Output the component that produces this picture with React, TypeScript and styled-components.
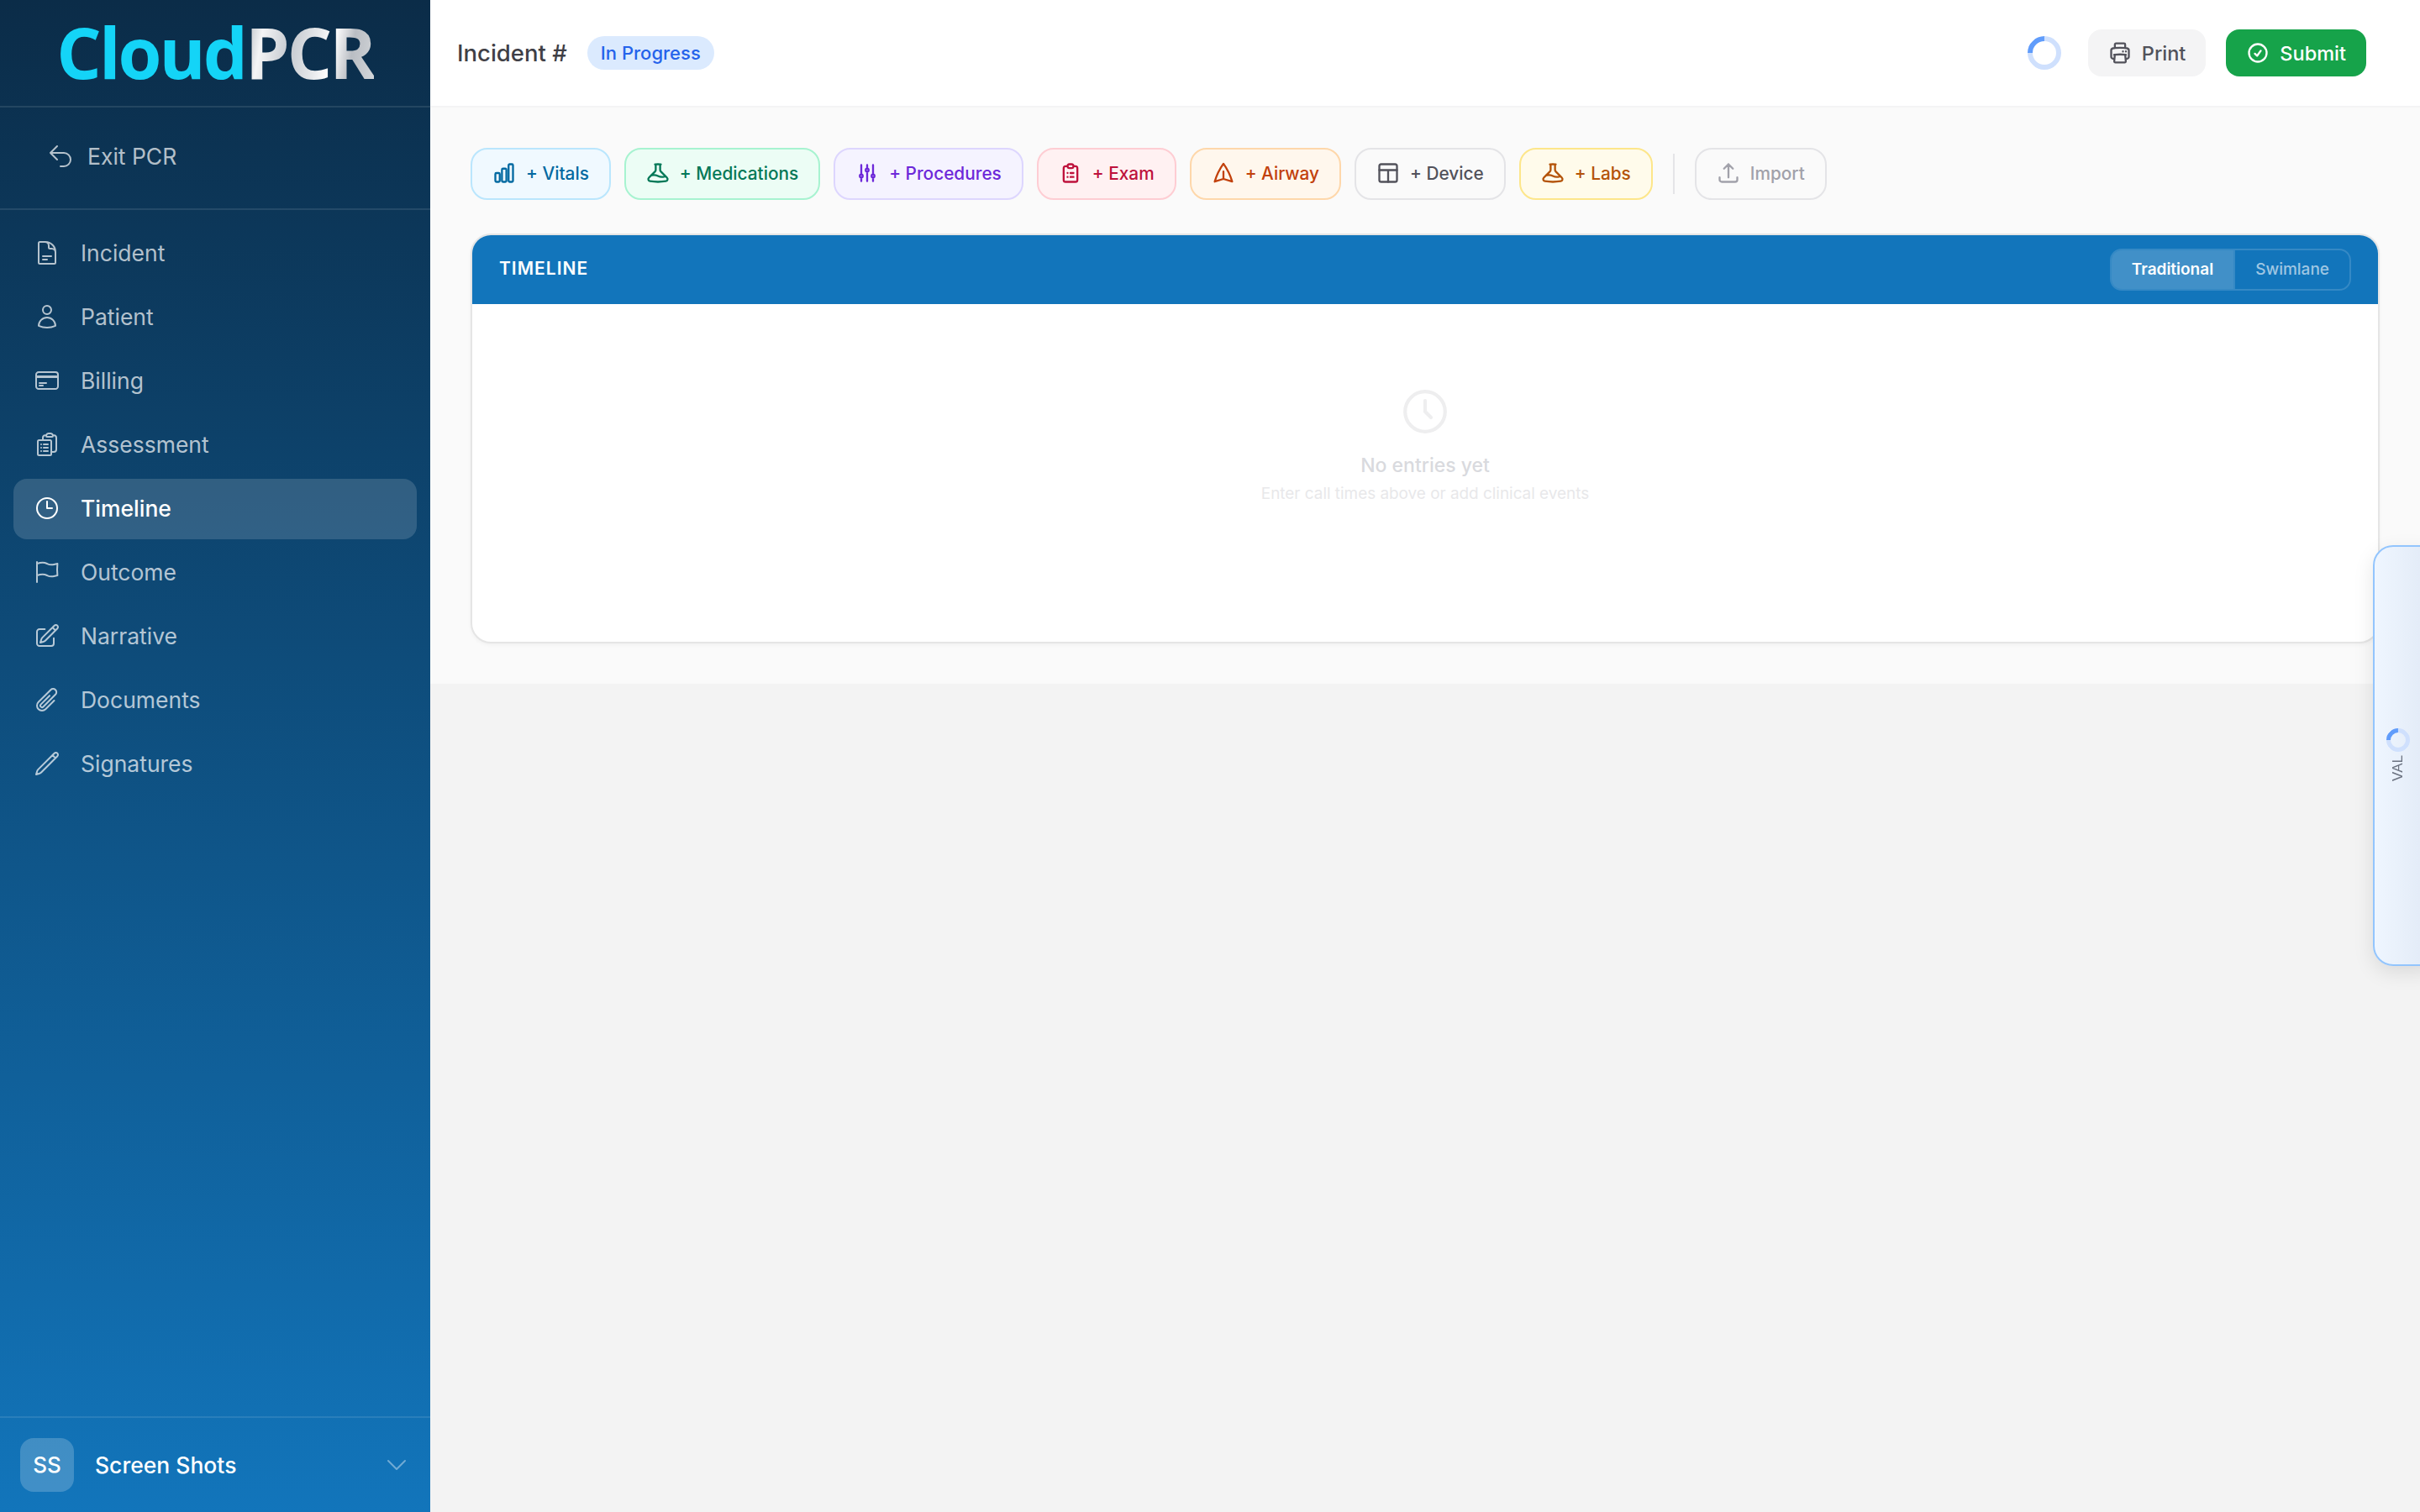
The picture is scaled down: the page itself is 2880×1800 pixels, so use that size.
import { ReactNode } from "react"
import styled, { createGlobalStyle } from "styled-components"
import {
    HiOutlineAdjustmentsVertical,
    HiOutlineArrowUpTray,
    HiOutlineArrowUturnLeft,
    HiOutlineBeaker,
    HiOutlineChartBar,
    HiOutlineCheckCircle,
    HiOutlineChevronDown,
    HiOutlineClipboardDocumentList,
    HiOutlineClock,
    HiOutlineCreditCard,
    HiOutlineDocumentText,
    HiOutlineFlag,
    HiOutlinePaperAirplane,
    HiOutlinePaperClip,
    HiOutlinePencil,
    HiOutlinePencilSquare,
    HiOutlinePrinter,
    HiOutlineUser
} from "react-icons/hi2"
import { HiOutlineClipboardList } from "react-icons/hi"

const FONT = `"Inter", "Noto Sans", sans-serif`

const GlobalStyle = createGlobalStyle`
    html, body {
        margin: 0;
        padding: 0;
        background: #f3f3f3;
    }
    body {
        font-family: ${FONT};
    }
    * {
        box-sizing: border-box;
    }
`

type Tone = { bg: string; border: string; text: string }

const TONES: Record<string, Tone> = {
    sky: { bg: "#f0f9ff", border: "#bae6fd", text: "#0369a1" },
    green: { bg: "#ecfdf5", border: "#a7f3d0", text: "#047857" },
    violet: { bg: "#f5f3ff", border: "#ddd6fe", text: "#6d28d9" },
    rose: { bg: "#fff1f2", border: "#fecdd3", text: "#be123c" },
    orange: { bg: "#fff7ed", border: "#fed7aa", text: "#c2410c" },
    gray: { bg: "#fafafa", border: "#e4e4e7", text: "#52525b" },
    amber: { bg: "#fffbeb", border: "#fde68a", text: "#b45309" },
    muted: { bg: "#fafafa", border: "#e4e4e7", text: "#a1a1aa" }
}

const AirwayIcon = styled(HiOutlinePaperAirplane)`
    transform: rotate(-90deg);
`

const DeviceIcon = () => (
    <svg viewBox="0 0 24 24" fill="none" stroke="currentColor" strokeLinecap="round" strokeLinejoin="round">
        <rect x="3" y="3" width="18" height="18" rx="2" />
        <path d="M3 9h18M12 9v12" />
    </svg>
)

const NAV_ITEMS: { label: string; icon: ReactNode; active?: boolean }[] = [
    { label: "Incident", icon: <HiOutlineDocumentText /> },
    { label: "Patient", icon: <HiOutlineUser /> },
    { label: "Billing", icon: <HiOutlineCreditCard /> },
    { label: "Assessment", icon: <HiOutlineClipboardDocumentList /> },
    { label: "Timeline", icon: <HiOutlineClock />, active: true },
    { label: "Outcome", icon: <HiOutlineFlag /> },
    { label: "Narrative", icon: <HiOutlinePencilSquare /> },
    { label: "Documents", icon: <HiOutlinePaperClip /> },
    { label: "Signatures", icon: <HiOutlinePencil /> }
]

const ACTIONS: { label: string; tone: string; icon: ReactNode }[] = [
    { label: "+ Vitals", tone: "sky", icon: <HiOutlineChartBar /> },
    { label: "+ Medications", tone: "green", icon: <HiOutlineBeaker /> },
    { label: "+ Procedures", tone: "violet", icon: <HiOutlineAdjustmentsVertical /> },
    { label: "+ Exam", tone: "rose", icon: <HiOutlineClipboardList /> },
    { label: "+ Airway", tone: "orange", icon: <AirwayIcon /> },
    { label: "+ Device", tone: "gray", icon: <DeviceIcon /> },
    { label: "+ Labs", tone: "amber", icon: <HiOutlineBeaker /> }
]

export default function App() {
    return (
        <Page>
            <GlobalStyle />
            <Sidebar>
                <LogoBar>
                    <Logo>
                        <LogoCloud>Cloud</LogoCloud>
                        <LogoPcr>PCR</LogoPcr>
                    </Logo>
                </LogoBar>
                <ExitBar>
                    <HiOutlineArrowUturnLeft />
                    Exit PCR
                </ExitBar>
                <Nav>
                    {NAV_ITEMS.map(item => (
                        <NavItem key={item.label} $active={!!item.active}>
                            {item.icon}
                            {item.label}
                        </NavItem>
                    ))}
                </Nav>
                <UserBar>
                    <Avatar>SS</Avatar>
                    <UserName>Screen Shots</UserName>
                    <UserChevron>
                        <HiOutlineChevronDown />
                    </UserChevron>
                </UserBar>
            </Sidebar>
            <Main>
                <Header>
                    <IncidentTitle>Incident #</IncidentTitle>
                    <StatusBadge>In Progress</StatusBadge>
                    <HeaderActions>
                        <Spinner $size={40} $stroke={6} />
                        <PrintButton>
                            <HiOutlinePrinter />
                            Print
                        </PrintButton>
                        <SubmitButton>
                            <HiOutlineCheckCircle />
                            Submit
                        </SubmitButton>
                    </HeaderActions>
                </Header>
                <Content>
                    <Toolbar>
                        {ACTIONS.map(action => (
                            <ActionButton key={action.label} $tone={TONES[action.tone]}>
                                {action.icon}
                                {action.label}
                            </ActionButton>
                        ))}
                        <ToolbarDivider />
                        <ActionButton $tone={TONES.muted}>
                            <HiOutlineArrowUpTray />
                            Import
                        </ActionButton>
                    </Toolbar>
                    <TimelineCard>
                        <CardHeader>
                            <CardTitle>TIMELINE</CardTitle>
                            <ViewToggle>
                                <ToggleOption $active>Traditional</ToggleOption>
                                <ToggleOption>Swimlane</ToggleOption>
                            </ViewToggle>
                        </CardHeader>
                        <EmptyState>
                            <svg
                                width="56"
                                height="56"
                                viewBox="0 0 24 24"
                                fill="none"
                                stroke="#eeeeef"
                                strokeWidth="1.8"
                                strokeLinecap="round"
                                strokeLinejoin="round"
                            >
                                <circle cx="12" cy="12" r="10.2" />
                                <path d="M12 6.5V12l3 3" />
                            </svg>
                            <EmptyTitle>No entries yet</EmptyTitle>
                            <EmptyHint>Enter call times above or add clinical events</EmptyHint>
                        </EmptyState>
                    </TimelineCard>
                </Content>
            </Main>
            <ValidationTab>
                <Spinner $size={28} $stroke={5} />
                <ValLabel>VAL</ValLabel>
            </ValidationTab>
        </Page>
    )
}

const Page = styled.div`
    position: relative;
    display: flex;
    width: 2880px;
    height: 1800px;
    overflow: hidden;
    background: #f3f3f3;
`

const Sidebar = styled.aside`
    display: flex;
    flex-direction: column;
    flex: 0 0 512px;
    height: 1800px;
    background: linear-gradient(180deg, #0b2c48 0%, #1275bb 100%);
`

const LogoBar = styled.div`
    display: flex;
    align-items: center;
    justify-content: center;
    height: 128px;
    border-bottom: 2px solid rgba(255, 255, 255, 0.1);
`

const Logo = styled.div`
    display: flex;
    align-items: baseline;
    margin-top: -2px;
    font-family: "Open Sans", sans-serif;
    font-size: 84px;
    line-height: 1;
    font-weight: 700;
    letter-spacing: -3px;
`

const LogoCloud = styled.span`
    color: #14d4f7;
`

const LogoPcr = styled.span`
    color: transparent;
    background: linear-gradient(
        100deg,
        #aeb4bb 0%,
        #f4f5f6 14%,
        #c5c9cf 35%,
        #e8eaec 55%,
        #ffffff 66%,
        #b9bdc3 80%,
        #d5d8db 100%
    );
    -webkit-background-clip: text;
    background-clip: text;
`

const ExitBar = styled.div`
    display: flex;
    align-items: center;
    gap: 16px;
    height: 122px;
    padding: 0 0 4px 56px;
    border-bottom: 2px solid rgba(255, 255, 255, 0.1);
    color: rgba(255, 255, 255, 0.7);
    font-size: 26.5px;

    svg {
        width: 32px;
        height: 32px;
    }
`

const Nav = styled.nav`
    display: flex;
    flex-direction: column;
    gap: 4px;
    flex: 1;
    padding: 16px 16px 0;
`

const NavItem = styled.div<{ $active: boolean }>`
    display: flex;
    align-items: center;
    gap: 24px;
    height: 72px;
    padding: 0 0 2px 24px;
    border-radius: 16px;
    font-size: 26.5px;
    font-weight: ${({ $active }) => ($active ? 500 : 400)};
    color: ${({ $active }) => ($active ? "#ffffff" : "rgba(255, 255, 255, 0.7)")};
    background: ${({ $active }) => ($active ? "rgba(255, 255, 255, 0.15)" : "transparent")};

    svg {
        width: 32px;
        height: 32px;
        flex: none;
    }
`

const UserBar = styled.div`
    display: flex;
    align-items: center;
    height: 114px;
    padding: 0 24px;
    border-top: 2px solid rgba(255, 255, 255, 0.1);
`

const Avatar = styled.div`
    display: flex;
    align-items: center;
    justify-content: center;
    width: 64px;
    height: 64px;
    padding-bottom: 2px;
    border-radius: 16px;
    background: rgba(255, 255, 255, 0.2);
    color: #ffffff;
    font-size: 26px;
    font-weight: 500;
`

const UserName = styled.div`
    flex: 1;
    margin-left: 25px;
    color: #ffffff;
    font-size: 26.5px;
    font-weight: 500;
`

const UserChevron = styled.div`
    display: flex;
    color: rgba(255, 255, 255, 0.4);

    svg {
        width: 32px;
        height: 32px;
    }
`

const Main = styled.main`
    display: flex;
    flex-direction: column;
    flex: 1;
    min-width: 0;
`

const Header = styled.header`
    display: flex;
    align-items: center;
    height: 128px;
    padding: 0 64px 0 32px;
    background: #ffffff;
    border-bottom: 2px solid #f4f4f5;
`

const IncidentTitle = styled.div`
    color: #3f3f46;
    font-size: 27.5px;
    font-weight: 500;
`

const StatusBadge = styled.div`
    display: flex;
    align-items: center;
    height: 40px;
    margin-left: 24px;
    padding: 0 16px;
    border-radius: 20px;
    background: #dbeafe;
    color: #2563eb;
    font-size: 22px;
    font-weight: 500;
`

const HeaderActions = styled.div`
    display: flex;
    align-items: center;
    margin-left: auto;
`

const Spinner = styled.div<{ $size: number; $stroke: number }>`
    width: ${({ $size }) => $size}px;
    height: ${({ $size }) => $size}px;
    border-radius: 50%;
    border: ${({ $stroke }) => $stroke}px solid #cfe0fd;
    border-top-color: #609cfb;
    transform: rotate(-45deg);
`

const PrintButton = styled.button`
    display: flex;
    align-items: center;
    gap: 12px;
    height: 56px;
    margin-left: 32px;
    padding: 0 24px;
    border: 0;
    border-radius: 16px;
    background: #f4f4f5;
    color: #52525b;
    font-family: inherit;
    font-size: 23.5px;
    font-weight: 500;

    svg {
        width: 28px;
        height: 28px;
        stroke-width: 2;
    }
`

const SubmitButton = styled.button`
    display: flex;
    align-items: center;
    gap: 12px;
    height: 56px;
    margin-left: 24px;
    padding: 0 24px;
    border: 0;
    border-radius: 16px;
    background: #16a34a;
    color: #ffffff;
    font-family: inherit;
    font-size: 23.5px;
    font-weight: 500;

    svg {
        width: 28px;
        height: 28px;
        stroke-width: 2;
    }
`

const Content = styled.div`
    padding: 48px;
    background: #fafafa;
`

const Toolbar = styled.div`
    display: flex;
    align-items: center;
    gap: 16px;
    margin-bottom: 40px;
`

const ActionButton = styled.button<{ $tone: Tone }>`
    display: flex;
    align-items: center;
    gap: 12px;
    height: 62px;
    padding: 0 24px 2px;
    border-radius: 20px;
    border: 2px solid ${({ $tone }) => $tone.border};
    background: ${({ $tone }) => $tone.bg};
    color: ${({ $tone }) => $tone.text};
    font-family: inherit;
    font-size: 20.8px;
    font-weight: 500;
    white-space: nowrap;

    svg {
        width: 28px;
        height: 28px;
        flex: none;
        stroke-width: 2;
    }
`

const ToolbarDivider = styled.div`
    width: 2px;
    height: 48px;
    margin: 0 8px;
    background: #e4e4e7;
`

const TimelineCard = styled.section`
    height: 488px;
    border: 2px solid #e5e5e5;
    border-radius: 24px;
    overflow: hidden;
    background: #ffffff;
    box-shadow: 0 2px 4px rgba(0, 0, 0, 0.04);
`

const CardHeader = styled.div`
    display: flex;
    align-items: center;
    justify-content: space-between;
    height: 82px;
    padding: 0 32px;
    background: #1275bb;
`

const CardTitle = styled.div`
    padding-bottom: 3px;
    color: #ffffff;
    font-size: 21px;
    font-weight: 600;
    letter-spacing: 1px;
`

const ViewToggle = styled.div`
    display: flex;
    height: 50px;
    border: 2px solid rgba(255, 255, 255, 0.15);
    border-radius: 14px;
    overflow: hidden;
`

const ToggleOption = styled.div<{ $active?: boolean }>`
    display: flex;
    align-items: center;
    padding: 0 24px 2px;
    font-size: 19px;
    font-weight: ${({ $active }) => ($active ? 600 : 500)};
    color: ${({ $active }) => ($active ? "#ffffff" : "rgba(255, 255, 255, 0.6)")};
    background: ${({ $active }) => ($active ? "rgba(255, 255, 255, 0.2)" : "transparent")};

    & + & {
        border-left: 2px solid rgba(255, 255, 255, 0.15);
    }
`

const EmptyState = styled.div`
    display: flex;
    flex-direction: column;
    align-items: center;
    padding-top: 100px;
`

const EmptyTitle = styled.div`
    margin-top: 20px;
    color: #d9dade;
    font-size: 23px;
    line-height: 32px;
    font-weight: 500;
`

const EmptyHint = styled.div`
    margin-top: 4px;
    color: #e8e8ea;
    font-size: 18.9px;
    line-height: 28px;
`

const ValidationTab = styled.div`
    position: absolute;
    top: 649px;
    right: -24px;
    width: 80px;
    height: 501px;
    padding: 216px 0 0 14px;
    display: flex;
    flex-direction: column;
    align-items: flex-start;
    gap: 4px;
    border: 2px solid #93c5fd;
    border-radius: 24px;
    background: linear-gradient(90deg, #eff6ff 0%, #dfe8f5 100%);
    box-shadow: 0 8px 24px rgba(0, 0, 0, 0.1);
`

const ValLabel = styled.div`
    margin-left: 5px;
    writing-mode: vertical-rl;
    transform: rotate(180deg);
    color: #6b7280;
    font-family: "Liberation Sans", sans-serif;
    font-size: 17px;
    line-height: 18px;
`
